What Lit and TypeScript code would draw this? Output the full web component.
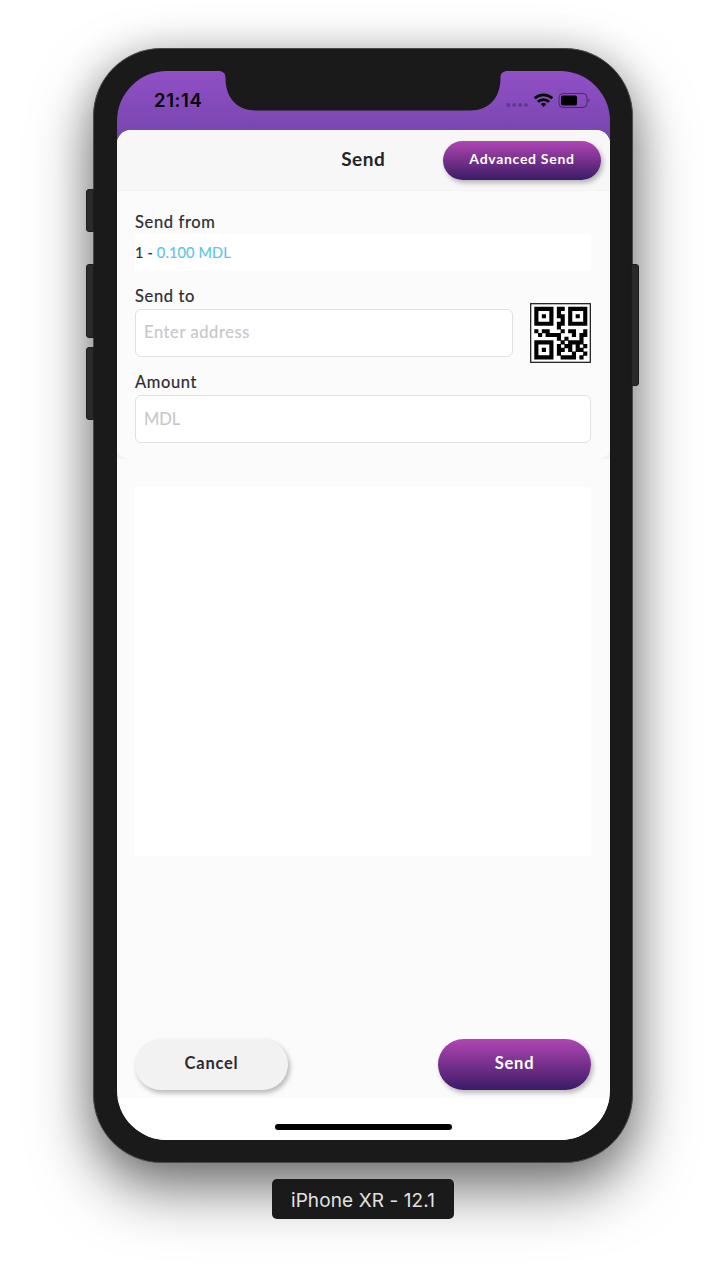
import { LitElement, html, css } from "lit";
import { customElement } from "lit/decorators.js";

const QR = [
  "#####.##.#####",
  "#...#.#..#...#",
  "#.#.#.##.#.#.#",
  "#...#..#.#...#",
  "#####.##.#####",
  "......#.......",
  "#.##...#.##..#",
  ".#.####...#.##",
  "......#.#...#.",
  "#####..#.####.",
  "#...#.#.##.#.#",
  "#.#.#.##.#.##.",
  "#...#.#...#..#",
  "#####..####.#.",
];

@customElement("app-root")
export class AppRoot extends LitElement {
  static styles = css`
    :host { display: block; width: 726px; height: 1280px; overflow: hidden; background: #fff; }
    * { box-sizing: border-box; }
    .stage { display: flex; flex-direction: column; align-items: center; padding-top: 48px; height: 1280px; font-family: Lato, sans-serif; color: #2b2b33; }
    .phone { position: relative; width: 540px; height: 1115px; padding: 22px 22.5px; border-radius: 68px; background: #1a1a1a; border: 1px solid #4a4a4a;
      box-shadow: 0 27px 60px rgba(0,0,0,.5), 0 4px 40px rgba(0,0,0,.2); }
    .key { position: absolute; background: #2a2a2a; width: 8px; left: -8px; border-radius: 3px 0 0 3px; border: 1px solid #1c1c1c; }
    .k1 { top: 140px; height: 43px; } .k2 { top: 215px; height: 74px; } .k3 { top: 298px; height: 73px; }
    .k4 { left: 537px; top: 215px; height: 122px; border-radius: 0 3px 3px 0; }
    .screen { position: relative; width: 493.5px; height: 1069px; border-radius: 50px; overflow: hidden; display: flex; flex-direction: column;
      background: linear-gradient(#924fc6 0, #7446ad 70px); }
    .notch { position: absolute; left: 101.5px; top: 0; }
    .status { height: 59px; flex: none; display: flex; justify-content: space-between; padding: 19px 19px 0 37.5px; }
    .time { font: 600 18.5px/21px Inter, sans-serif; letter-spacing: .6px; color: #000; }
    .sheet { flex: 1; background: #fbfbfb; border-radius: 14px 14px 0 0; overflow: hidden; display: flex; flex-direction: column; }
    .head { height: 61px; flex: none; background: #f7f7f7; border-bottom: 1px solid #f3f3f3; display: grid; grid-template-columns: 1fr auto 1fr; align-items: center; padding: 0 9px; }
    .title { grid-column: 2; font-size: 19px; font-weight: 700; letter-spacing: .55px; line-height: 24px; margin-top: -2px; color: #242428; }
    .btn { border-radius: 30px; display: flex; align-items: center; justify-content: center; font-weight: 700; box-shadow: 2px 3px 5px rgba(0,0,0,.27); }
    .purple { background: linear-gradient(#b046b3, #3b1b66); color: #fff; }
    .adv { justify-self: end; width: 158px; height: 39px; font-size: 14px; letter-spacing: .7px; padding-bottom: 3px; }
    .form { position: relative; height: 268px; flex: none; padding: 19px 19px 0 18.5px; display: flex; flex-direction: column; }
    .corner { position: absolute; bottom: 0; width: 12px; height: 12px; fill: #f2f2f2; }
    .cl { left: 0; } .cr { right: 0; transform: scaleX(-1); }
    .label { font-size: 16.5px; letter-spacing: .65px; line-height: 24px; -webkit-text-stroke: .2px; white-space: nowrap; }
    .wallet { background: #fff; height: 37px; line-height: 38px; font-size: 14.5px; letter-spacing: .15px; -webkit-text-stroke: .15px; margin-bottom: 13px; }
    .row { display: flex; justify-content: space-between; height: 48px; margin-top: 1px; }
    .input { height: 48px; border: 1px solid #e0e0e2; border-radius: 6px; background: #fff; padding-left: 8px; line-height: 44px; font-size: 16.5px; letter-spacing: .6px; color: #c7c7cc; -webkit-text-stroke: .15px; }
    .addr { width: 378px; }
    .blue { color: #5ac4ea; }
    .qr { margin-top: -6px; width: 61px; height: 60px; display: block; }
    .amount { margin-top: 13px; }
    .code { letter-spacing: 0; line-height: 46px; margin-top: 1px; }
    .list { height: 369px; flex: none; margin: 28px 19px 0 18.5px; background: #fff; }
    .actions { display: flex; justify-content: space-between; padding: 183px 19px 0 18.5px; height: 242px; flex: none; }
    .act { width: 153px; height: 51px; font-size: 16.5px; letter-spacing: .75px; padding-bottom: 3px; }
    .cancel { background: #f2f2f2; }
    .safe { flex: 1; background: #fff; display: flex; justify-content: center; padding-top: 26px; }
    .bar { width: 177px; height: 6px; border-radius: 3px; background: #000; }
    .caption { position: relative; margin-top: 16px; width: 182px; height: 40px; border-radius: 5px; background: #1a1a1a; color: #e2e2e2; font: 400 19px/43px Inter, sans-serif; letter-spacing: .1px; text-align: center; }
  `;

  render() {
    const cells = QR.flatMap((line, y) =>
      [...line].map((c, x) => (c === "#" ? `M${x} ${y}h1.1v1.1h-1.1z` : ""))).join("");
    return html`
      <div class="stage">
        <div class="phone">
          <div class="key k1"></div><div class="key k2"></div><div class="key k3"></div><div class="key k4"></div>
          <div class="screen">
            <svg class="notch" width="290" height="40" viewBox="0 0 290 40">
              <path fill="#1a1a1a" d="M0-1V0C5 0 7.500 2 7.500 7C7.500 27 19 39.500 38 39.500H252C271 39.500 282.500 27 282.500 7C282.500 2 285 0 290 0V-1Z"></path>
            </svg>
            <div class="status">
              <span class="time">21:14</span>
              <svg width="86" height="22" viewBox="0 0 86 22">
                <g fill="#000" fill-opacity=".25"><circle cx="3.200" cy="15" r="2"></circle><circle cx="9.200" cy="15" r="2"></circle><circle cx="15.200" cy="15" r="2"></circle><circle cx="21" cy="15" r="2"></circle></g>
                <g fill="none" stroke="#000" stroke-width="2.700"><path d="M29.700 8.300a13 13 0 0 1 17.600 0"></path><path d="M32.900 11.800a8.300 8.300 0 0 1 11.200 0"></path></g>
                <path d="M35.700 14a4.200 4.200 0 0 1 5.600 0L38.500 17Z"></path>
                <rect x="54" y="3.500" width="28" height="14" rx="4" fill="none" stroke="#000" stroke-opacity=".45"></rect>
                <rect x="56" y="5.500" width="16" height="10" rx="1.800"></rect>
                <path d="M83.500 8.500q2 2 0 4Z" fill-opacity=".6"></path>
              </svg>
            </div>
            <div class="sheet">
              <div class="head">
                <div class="title">Send</div>
                <div class="btn purple adv">Advanced Send</div>
              </div>
              <div class="form">
                <div class="label">Send from</div>
                <div class="wallet">1 - <span class="blue">0.100 MDL</span></div>
                <div class="label">Send to</div>
                <div class="row">
                  <div class="input addr">Enter address</div>
                  <svg class="qr" viewBox="0 0 61 60">
                    <rect x=".7" y=".7" width="59.600" height="58.600" fill="#fff" stroke="#111" stroke-width="1.200"></rect>
                    <path transform="translate(4.300 3.800) scale(3.760 3.730)" d=${cells}></path>
                  </svg>
                </div>
                <div class="label amount">Amount</div>
                <div class="input code">MDL</div>
                <svg class="corner cl" viewBox="0 0 12 12"><path d="M0 3Q2 11 12 12H0Z"></path></svg>
                <svg class="corner cr" viewBox="0 0 12 12"><path d="M0 3Q2 11 12 12H0Z"></path></svg>
              </div>
              <div class="list"></div>
              <div class="actions">
                <div class="btn act cancel">Cancel</div>
                <div class="btn act purple">Send</div>
              </div>
              <div class="safe"><div class="bar"></div></div>
            </div>
          </div>
        </div>
        <div class="caption">iPhone XR - 12.1</div>
      </div>`;
  }
}
